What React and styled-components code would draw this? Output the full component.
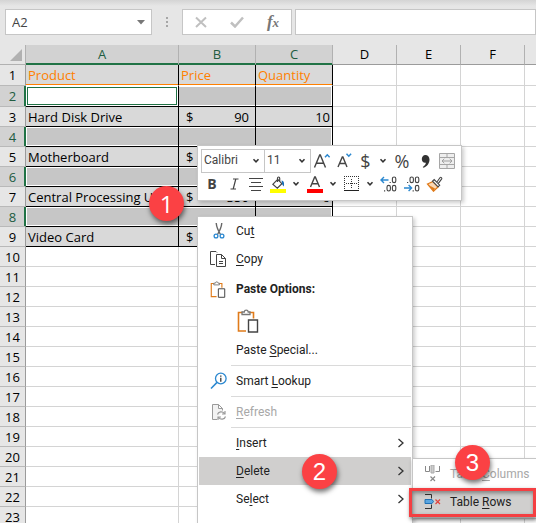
import React from "react";
import styled, { createGlobalStyle, css } from "styled-components";

const GlobalStyle = createGlobalStyle`
  *, *::before, *::after { box-sizing: border-box; }
  body { margin: 0; background: #fff; font-family: "Open Sans", "Noto Sans", sans-serif; }
  button, input, select { font: inherit; color: inherit; }
`;

const Window = styled.div`
  position: relative;
  height: 100vh;
  overflow: hidden;
  background: #fff;
`;

/* ---------- formula bar ---------- */

const FormulaBar = styled.header`
  display: flex;
  align-items: center;
  height: 45px;
  padding: 0 0 1px 5px;
  background: linear-gradient(#d4d4d4, #e6e6e6 6px);
`;

const BarBox = styled.div`
  display: flex;
  align-items: center;
  height: 26px;
  border: 1px solid #c6c6c6;
  background: #fff;
  flex: ${(p) => (p.$grow ? "1 1 0" : "none")};
  width: ${(p) => p.$width || "auto"};
  margin-left: ${(p) => p.$gap || "0"};
  min-width: 0;
`;

const BarInput = styled.input`
  flex: 1;
  min-width: 0;
  height: 24px;
  padding: 0 6px;
  border: 0;
  outline: 0;
  background: transparent;
  color: #444;
  font-size: 13px;
`;

const BarButton = styled.button`
  display: flex;
  align-items: center;
  justify-content: center;
  flex: ${(p) => (p.$narrow ? "none" : "1")};
  width: 20px;
  height: 24px;
  padding: 0;
  border: 0;
  background: none;
`;

const Grip = styled.span`
  display: grid;
  gap: 2px;
  width: 2px;
  margin-left: 14px;
  &::before, &::after, i { content: ""; display: block; width: 2px; height: 2px; background: #a6a6a6; }
`;

const FxLabel = styled.span`
  font: italic bold 17px/20px "Liberation Serif", serif;
  color: #777;
  sub { font-size: 13px; line-height: 1; vertical-align: baseline; }
`;

/* ---------- grid ---------- */

const Sheet = styled.table`
  width: 100%;
  table-layout: fixed;
  border-collapse: separate;
  border-spacing: 0;
  font-size: 13px;
  line-height: 18px;
  color: #000;
`;

const Col = styled.col`
  width: ${(p) => p.$width || "auto"};
`;

const Corner = styled.th`
  height: 20px;
  padding: 0 3px 0 0;
  border-right: 1px solid #b1b1b1;
  border-bottom: 1px solid #b1b1b1;
  background: #e6e6e6;
  text-align: right;
  svg { display: block; margin-left: auto; }
`;

const ColHead = styled.th`
  height: 20px;
  padding: 0;
  border-right: 1px solid #b1b1b1;
  border-bottom: 1px solid #9b9b9b;
  background: #e6e6e6;
  font-weight: 400;
  font-size: 13px;
  line-height: 17px;
  &:last-child { border-right: 0; }
  ${(p) => p.$selected && css`
    background: #d2d2d2;
    color: #215c41;
    border-bottom-color: #217346;
    box-shadow: inset 0 -1px #217346;
  `}
`;

const RowHead = styled.th`
  height: ${(p) => (p.$tall ? "21px" : "20px")};
  padding: 0;
  border-right: 1px solid #9b9b9b;
  border-bottom: 1px solid #b9b9b9;
  background: #e6e6e6;
  font-weight: 400;
  ${(p) => p.$selected && css`
    background: #d2d2d2;
    color: #215c41;
    border-right-color: #217346;
    box-shadow: inset -1px 0 #217346;
  `}
`;

const Cell = styled.td`
  padding: 0 2px;
  border-right: 1px solid #d4d4d4;
  border-bottom: 1px solid #d4d4d4;
  white-space: nowrap;
  overflow: hidden;
  text-align: ${(p) => (p.$right ? "right" : "left")};
  &:last-child { border-right: 0; }
  ${(p) => p.$filled && css`
    background: #d9d9d9;
    border-color: #000;
  `}
  ${(p) => p.$heading && css`
    color: #ff8000;
    border-bottom-color: #fff;
    box-shadow: inset 0 -1px #ff8000;
  `}
  ${(p) => p.$selected && css`
    background: #c6c6c6;
    box-shadow: inset 0 1px #fff, inset 0 -1px #fff
      ${p.$edge === "left" ? ", inset 1px 0 #fff" : ""}
      ${p.$edge === "right" ? ", inset -1px 0 #fff" : ""};
  `}
  ${(p) => p.$active && css`
    background: #fff;
    box-shadow: inset 0 0 0 1px #fff, inset 0 0 0 2px #217346;
  `}
`;

const Money = styled.span`
  display: flex;
  justify-content: space-between;
  padding: 0 4px 0 5px;
`;

/* ---------- floating pieces ---------- */

const MiniToolbar = styled.div`
  position: absolute;
  left: 197px;
  top: 145px;
  display: grid;
  grid-template-rows: 24px 22px;
  padding: 3px;
  width: 265px;
  height: 56px;
  border: 1px solid #c6c6c6;
  background: #fff;
  box-shadow: 2px 2px 4px rgba(0, 0, 0, 0.2);
  color: #444;
`;

const ToolRow = styled.div`
  display: flex;
  align-items: center;
`;

const Tool = styled.button`
  display: flex;
  align-items: center;
  justify-content: center;
  width: ${(p) => p.$width}px;
  height: 22px;
  padding: 0;
  border: 0;
  background: none;
  font-size: ${(p) => p.$size || 13}px;
  line-height: 20px;
  font-weight: ${(p) => (p.$bold ? 700 : 400)};
  svg { flex: none; }
`;

const SelectBox = styled.span`
  display: grid;
  grid-template-columns: 1fr 12px;
  align-items: center;
  width: ${(p) => p.$width}px;
  height: 24px;
  border: 1px solid #c6c6c6;
  & + & { border-left: 0; }
  select, svg { grid-row: 1; }
  svg { grid-column: 2; pointer-events: none; }
`;

const Select = styled.select`
  grid-column: 1 / 3;
  width: 100%;
  height: 22px;
  padding: 0 0 2px 2px;
  border: 0;
  outline: 0;
  appearance: none;
  background: transparent;
  color: #444;
  font-family: Roboto, sans-serif;
  font-size: 12px;
`;

const Menu = styled.div`
  position: absolute;
  left: 197px;
  top: 216px;
  bottom: 0;
  width: 216px;
  padding: 0 1px;
  border: 1px solid #c6c6c6;
  border-bottom: 0;
  background: #fff;
  box-shadow: 2px 2px 4px rgba(0, 0, 0, 0.2);
`;

const SubMenu = styled.div`
  position: absolute;
  left: 412px;
  right: 0;
  top: 458px;
  padding: 1px 0 2px;
  border: 1px solid #c6c6c6;
  border-right: 0;
  background: #fff;
  box-shadow: 0 2px 4px rgba(0, 0, 0, 0.2);
`;

const MenuItem = styled.button`
  display: grid;
  grid-template-columns: 37px 1fr 14px;
  align-items: center;
  width: 100%;
  height: ${(p) => (p.$tall ? "32px" : "28px")};
  padding: 0;
  border: 0;
  background: ${(p) => (p.$hot ? "#d0cfce" : "none")};
  color: ${(p) => (p.$dim ? "#a8a8a8" : "#222")};
  font-family: Roboto, sans-serif;
  font-size: 12px;
  font-weight: ${(p) => (p.$bold ? 700 : 400)};
  text-align: left;
  white-space: nowrap;
  > svg:first-child { margin-left: 11px; }
  > span { grid-column: 2; }
  u { text-underline-offset: 2px; }
`;

const PasteRow = styled.div`
  display: flex;
  align-items: center;
  height: 31px;
  padding-left: 34px;
`;

const Separator = styled.hr`
  height: 1px;
  margin: 1px 0 1px 32px;
  border: 0;
  background: #dadada;
`;

const RedFrame = styled.div`
  position: absolute;
  left: 409px;
  right: 0;
  top: 488px;
  height: 29px;
  border: 3px solid #f43f42;
  box-shadow: 1px 2px 4px rgba(0, 0, 0, 0.5), inset 1px 2px 4px rgba(0, 0, 0, 0.4);
  pointer-events: none;
`;

const Badge = styled.span`
  position: absolute;
  left: ${(p) => p.$x}px;
  top: ${(p) => p.$y}px;
  display: flex;
  align-items: center;
  justify-content: center;
  width: 35px;
  height: 35px;
  border-radius: 50%;
  background: #fb4144;
  color: #fff;
  font-family: ${(p) => (p.$humanist ? '"Open Sans"' : '"Liberation Sans"')}, sans-serif;
  font-size: 24px;
  line-height: 35px;
  box-shadow: 1px 3px 5px rgba(0, 0, 0, 0.55);
`;

/* ---------- icons ---------- */

const Svg = ({ w, h = w, children }) => (
  <svg width={w} height={h} viewBox={`0 0 ${w} ${h}`} fill="none" aria-hidden="true">
    {children}
  </svg>
);

const Chevron = () => (
  <Svg w={8} h={6}><path d="M1.5 1.2 4 3.8 6.5 1.2" stroke="#333" strokeWidth="1.5" /></Svg>
);

const RightArrow = () => (
  <Svg w={8} h={10}><path d="M1.5 1 6 5 1.5 9" stroke="#333" strokeWidth="1.3" /></Svg>
);

const LetterIcon = ({ small, up }) => (
  <Svg w={18} h={18}>
    {small ? (
      <path d="M2 15 6.3 5h.6L11 15M3.7 11.5h5.7" stroke="#444" strokeWidth="1.4" />
    ) : (
      <path d="M1.5 15.5 6.7 3h.6l5.2 12.5M3.4 11.2h7.3" stroke="#444" strokeWidth="1.4" />
    )}
    <path d={up ? "M12 5.2 14.3 2.8 16.6 5.2" : "M10.5 1.8 12.8 4.2 15.1 1.8"} stroke="#2b88d0" strokeWidth="1.5" />
  </Svg>
);

const MergeIcon = () => (
  <Svg w={16}>
    <path d="M.5.5h15v15H.5zM.5 4.5h15M.5 11.5h15M8 .5v4M8 11.5v4" fill="#eee" stroke="#a6a6a6" />
    <path d="M3 8h10M5.3 5.8 3 8l2.3 2.2M10.7 5.8 13 8l-2.3 2.2" stroke="#a0a0a0" />
  </Svg>
);

const AlignIcon = () => (
  <Svg w={14}><path d="M0 1.5h14M2 5.5h10M0 9.5h14M2 13.5h10" stroke="#444" /></Svg>
);

const FillIcon = () => (
  <Svg w={17} h={17}>
    <path d="M2.8 8.3 7.7 3.3l4.2 4.4-4.6 4.4zM7.5 6V2.2c0-1.6 2.2-1.6 2.2 0v3" stroke="#444" strokeWidth="1.2" />
    <path d="M11.5 4.5c2.5.3 3 2.7 2.3 6-.9-1.2-2.2-2-1.8-3.5z" fill="#1e70b5" />
    <path d="M0 13h16v4H0z" fill="#ff0" />
  </Svg>
);

const FontColorIcon = () => (
  <Svg w={17} h={17}>
    <path d="M3.5 11 7.7 1h.6l4.2 10M5 7.7h6" stroke="#444" strokeWidth="1.4" />
    <path d="M0 13h16v4H0z" fill="#f00" />
  </Svg>
);

const BordersIcon = () => (
  <Svg w={16}>
    <path d="M.5 0v14M14.5 0v14M0 .5h15M7.5 3v10M2 7.5h12" stroke="#333" strokeDasharray="1 1" />
    <path d="M0 14.5h15" stroke="#222" strokeWidth="1" />
  </Svg>
);

const DecimalIcon = ({ less }) => (
  <Svg w={18} h={16}>
    <g stroke="#444" strokeWidth="1.1">
      {less ? (
        <>
          <rect x="7" y="1" width="3.4" height="5.6" rx="1.7" />
          <rect x="12.4" y="1" width="3.4" height="5.6" rx="1.7" />
          <rect x="12.4" y="9.4" width="3.4" height="5.6" rx="1.7" />
          <path d="M4 6.5h1.2M9.6 14.9h1.2" />
        </>
      ) : (
        <>
          <rect x="12.4" y="1" width="3.4" height="5.6" rx="1.7" />
          <rect x="7" y="9.4" width="3.4" height="5.6" rx="1.7" />
          <rect x="12.4" y="9.4" width="3.4" height="5.6" rx="1.7" />
          <path d="M9.6 6.5h1.2M4 14.9h1.2" />
        </>
      )}
    </g>
    <path
      d={less ? "M1 12h7.5M5.6 9l3 3-3 3" : "M8.5 4H1M4 1 1 4l3 3"}
      stroke="#2b88d0"
      strokeWidth="1.4"
    />
  </Svg>
);

const BrushIcon = () => (
  <Svg w={17} h={16}>
    <path d="M1.5 8 7 5.5l5 5.5-4.5 4.2z" fill="#fbd9b5" stroke="#e07b1a" strokeWidth="1.3" />
    <path d="M3.5 9.6 9 12.6l-1.5 2.2z" fill="#e07b1a" />
    <path d="m6.5 5.2 1.7-1.6 5.5 5.6-1.6 1.6zM10.8 6.3l3.3-4.8c.7-.8 2.2.5 1.6 1.4l-3.5 4.7" fill="#fff" stroke="#444" strokeWidth="1.1" />
  </Svg>
);

const CutIcon = () => (
  <Svg w={18}>
    <path d="M6.200 1c.3 3.500 1.300 6.500 4.300 11.500M11.800 1c-.3 3.500-1.300 6.500-4.300 11.500" stroke="#666" strokeWidth="1.400" />
    <circle cx="6" cy="14" r="1.900" stroke="#2b88d0" strokeWidth="1.300" />
    <circle cx="12" cy="14" r="1.900" stroke="#2b88d0" strokeWidth="1.300" />
  </Svg>
);

const CopyIcon = () => (
  <Svg w={18}>
    <path d="M5 14.500H.500V1.500h5.500l1 1" stroke="#444" />
    <path d="M6.500 4.500h5l4 4v8h-9zM11.500 4.500v4h4M9 11.500h4M9 13.500h4" stroke="#444" />
  </Svg>
);

const PasteIcon = ({ big }) => (
  <svg width={big ? 22 : 16} height={big ? 24 : 17} viewBox="0 0 22 24" fill="none" aria-hidden="true">
    <path d="M6 3.500H1.500v18.500H9M12 3.500h4.500v6" stroke="#e07b1a" strokeWidth="1.600" />
    <path d="M5 5.500V3h2.300C7.500.5 11 .5 11.200 3H13v2.500z" stroke="#777" strokeWidth="1.300" fill="#fff" />
    <path d="M11.500 11h9v12h-9z" stroke="#444" strokeWidth="1.400" fill="#fff" />
  </svg>
);

const LookupIcon = () => (
  <Svg w={18}>
    <circle cx="10.800" cy="6.500" r="5.300" stroke="#2b88d0" strokeWidth="1.300" />
    <path d="M7 10.400 1 16.500" stroke="#2b88d0" strokeWidth="1.500" />
    <path d="M10.800 3.500v1.200M10.800 5.700v4" stroke="#333" strokeWidth="1.300" />
  </Svg>
);

const RefreshIcon = () => (
  <Svg w={18}>
    <path d="M7 16.500H2.500v-15h6l4 4v2M8.500 1.500v4h4" stroke="#9a9a9a" fill="#f2f2f2" />
    <path d="M7.500 11.500c.8-3 5-3.500 7-1M15 8v3h-3M15.500 13.500c-.8 3-5 3.500-7 1M8 17v-3h3" stroke="#9a9a9a" strokeWidth="1.200" />
  </Svg>
);

const ColumnsIcon = () => (
  <Svg w={18}>
    <path d="M5.500 1v5.500h-4V1M11.500 6.500h4V1" stroke="#888" />
    <path d="M7 0h3v8H7z" fill="#ccc" stroke="#aaa" />
    <path d="m6.500 11.500 4.500 4.500M11 11.500 6.500 16" stroke="#888" strokeWidth="1.200" />
  </Svg>
);

const RowsIcon = () => (
  <Svg w={18}>
    <path d="M1 1.500h6.500v4M1 15.500h6.500v-4" stroke="#333" />
    <path d="M1 6.500h7l1.500 2-1.500 2H1z" fill="#5ba6e0" stroke="#1e70b5" />
    <path d="m11.500 6.500 4.500 4.500M16 6.500 11.500 11" stroke="#e0443e" strokeWidth="1.200" />
  </Svg>
);

/* ---------- data ---------- */

const COLUMNS = ["A", "B", "C", "D", "E", "F", ""];
const WIDTHS = ["153px", "77px", "77px", "64px", "64px", "64px", ""];
const ITEMS = {
  3: ["Hard Disk Drive", "90", "10"],
  5: ["Motherboard", "200", "8"],
  7: ["Central Processing Unit", "350", "6"],
  9: ["Video Card", "400", "5"],
};
const SELECTED = [2, 4, 6, 8];
const ROWS = Array.from({ length: 23 }, (_, i) => i + 1);

function cellContent(row, col) {
  if (row === 1) return ["Product", "Price", "Quantity"][col];
  const item = ITEMS[row];
  if (!item || col > 2) return null;
  if (col === 1) return <Money><span>$</span><span>{item[1]}</span></Money>;
  return item[col];
}

function Grid() {
  return (
    <Sheet>
      <colgroup>
        <Col $width="26px" />
        {WIDTHS.map((w, i) => <Col key={i} $width={w} />)}
      </colgroup>
      <thead>
        <tr>
          <Corner><Svg w={12}><path d="M12 0v12H0z" fill="#b1b1b1" /></Svg></Corner>
          {COLUMNS.map((c, i) => <ColHead key={i} $selected={i < 3}>{c}</ColHead>)}
        </tr>
      </thead>
      <tbody>
        {ROWS.map((r) => {
          const selected = SELECTED.includes(r);
          return (
            <tr key={r}>
              <RowHead $tall={r < 3} $selected={selected}>{r}</RowHead>
              {COLUMNS.map((_, c) => {
                const filled = r < 10 && c < 3;
                return (
                  <Cell
                    key={c}
                    $filled={filled}
                    $heading={r === 1 && filled}
                    $selected={selected && filled}
                    $edge={["left", "", "right"][c]}
                    $active={r === 2 && c === 0}
                    $right={r > 1 && c === 2}
                  >
                    {cellContent(r, c)}
                  </Cell>
                );
              })}
            </tr>
          );
        })}
      </tbody>
    </Sheet>
  );
}

function Picker({ label, value, width }) {
  return (
    <SelectBox $width={width}>
      <Select aria-label={label} defaultValue={value}><option>{value}</option></Select>
      <Chevron />
    </SelectBox>
  );
}

const More = ({ label, width }) => <Tool $width={width} aria-label={label}><Chevron /></Tool>;

export default function App() {
  return (
    <Window>
      <GlobalStyle />
      <FormulaBar>
        <BarBox $width="147px">
          <BarInput aria-label="Name box" defaultValue="A2" />
          <BarButton $narrow aria-label="Cell names">
            <Svg w={8} h={5}><path d="M0 0h8L4 4.500z" fill="#777" /></Svg>
          </BarButton>
        </BarBox>
        <Grip><i /></Grip>
        <BarBox $width="110px" $gap="14px">
          <BarButton aria-label="Cancel">
            <Svg w={12}><path d="m1 1.500 10 9.500M11 1.500 1 11" stroke="#c0c0c0" strokeWidth="2" /></Svg>
          </BarButton>
          <BarButton aria-label="Enter">
            <Svg w={14} h={12}><path d="m1 6.500 4 4L13 1.500" stroke="#c0c0c0" strokeWidth="2.500" /></Svg>
          </BarButton>
          <BarButton aria-label="Insert function"><FxLabel>f<sub>x</sub></FxLabel></BarButton>
        </BarBox>
        <BarBox $grow $gap="3px"><BarInput aria-label="Formula" /></BarBox>
      </FormulaBar>

      <Grid />

      <MiniToolbar role="toolbar" aria-label="Formatting">
        <ToolRow>
          <Picker label="Font" value="Calibri" width={64} />
          <Picker label="Font size" value="11" width={46} />
          <Tool $width={22} aria-label="Increase font size"><LetterIcon up /></Tool>
          <Tool $width={24} aria-label="Decrease font size"><LetterIcon small /></Tool>
          <Tool $width={17} $size={18}>$</Tool>
          <More label="More currencies" width={18} />
          <Tool $width={20} $size={18}>%</Tool>
          <Tool $width={26} aria-label="Comma style">
            <Svg w={9} h={13}><path d="M4.300 0C6.800 0 8.500 1.800 8.500 4.500c0 4-2.500 7-6 8.300L1.700 12c2-1.200 3-2.700 3.200-4.300C2.500 8.200.8 6.500.8 4 .8 1.700 2.300 0 4.300 0z" fill="#333" /></Svg>
          </Tool>
          <Tool $width={18} aria-label="Merge"><MergeIcon /></Tool>
        </ToolRow>
        <ToolRow>
          <Tool $width={22} $bold $size={14}>B</Tool>
          <Tool $width={22} aria-label="Italic">
            <Svg w={9} h={12}><path d="M3 1h5.500M.500 11H6M5.800 1 3.200 11" stroke="#444" strokeWidth="1.200" /></Svg>
          </Tool>
          <Tool $width={22} aria-label="Center"><AlignIcon /></Tool>
          <Tool $width={22} aria-label="Fill color"><FillIcon /></Tool>
          <More label="More fill colors" width={14} />
          <Tool $width={24} aria-label="Font color"><FontColorIcon /></Tool>
          <More label="More font colors" width={12} />
          <Tool $width={25} aria-label="Borders"><BordersIcon /></Tool>
          <More label="More borders" width={12} />
          <Tool $width={25} aria-label="Increase decimal"><DecimalIcon /></Tool>
          <Tool $width={22} aria-label="Decrease decimal"><DecimalIcon less /></Tool>
          <Tool $width={22} aria-label="Format painter"><BrushIcon /></Tool>
        </ToolRow>
      </MiniToolbar>

      <Menu>
        <MenuItem><CutIcon /><span>Cu<u>t</u></span></MenuItem>
        <MenuItem><CopyIcon /><span><u>C</u>opy</span></MenuItem>
        <MenuItem $tall $bold><PasteIcon /><span>Paste Options:</span></MenuItem>
        <PasteRow><Tool $width={30} aria-label="Paste"><PasteIcon big /></Tool></PasteRow>
        <MenuItem><span>Paste <u>S</u>pecial...</span></MenuItem>
        <Separator />
        <MenuItem><LookupIcon /><span>Smart <u>L</u>ookup</span></MenuItem>
        <Separator />
        <MenuItem $dim disabled><RefreshIcon /><span><u>R</u>efresh</span></MenuItem>
        <Separator />
        <MenuItem><span><u>I</u>nsert</span><RightArrow /></MenuItem>
        <MenuItem $hot><span><u>D</u>elete</span><RightArrow /></MenuItem>
        <MenuItem><span>Se<u>l</u>ect</span><RightArrow /></MenuItem>
      </Menu>

      <SubMenu>
        <MenuItem $dim disabled><ColumnsIcon /><span>Table <u>C</u>olumns</span></MenuItem>
        <MenuItem $hot><RowsIcon /><span>Table <u>R</u>ows</span></MenuItem>
      </SubMenu>

      <RedFrame />
      <Badge $x={149} $y={186} $humanist>1</Badge>
      <Badge $x={302} $y={454}>2</Badge>
      <Badge $x={455} $y={445}>3</Badge>
    </Window>
  );
}
